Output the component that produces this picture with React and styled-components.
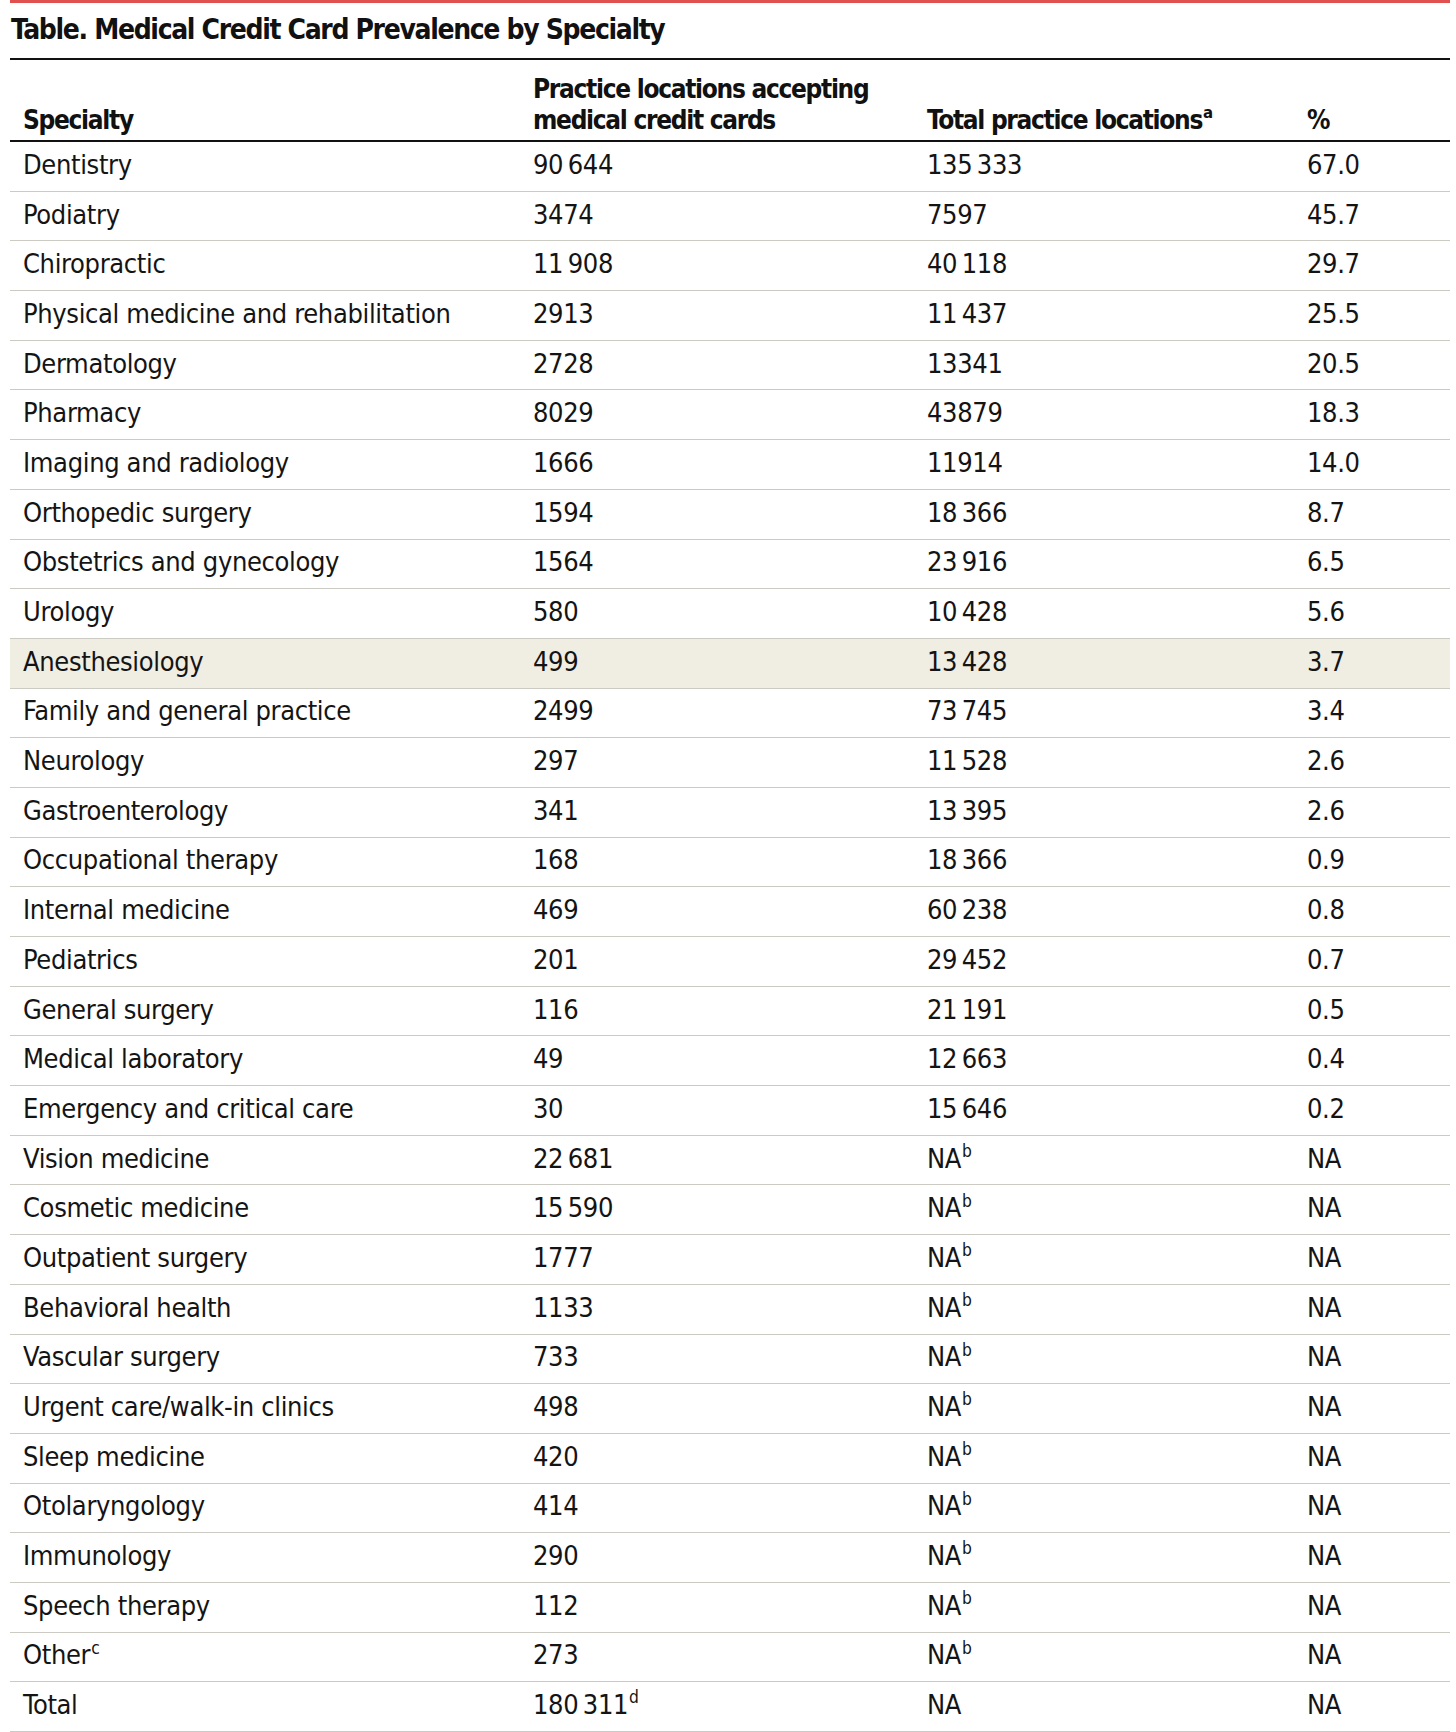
import React from 'react';
import styled, { createGlobalStyle } from 'styled-components';

const GlobalStyle = createGlobalStyle`
  html, body {
    margin: 0;
    padding: 0;
    background: #fff;
  }
  body {
    font-family: "DejaVu Sans Condensed", "Liberation Sans Narrow", "Liberation Sans", sans-serif;
    color: #141414;
  }
`;

// thin space between digit groups, as in the printed table
const n = s => s.replace(/ /g, '\u2009');

const rows = [
    ['Dentistry', '90 644', '135 333', '67.0'],
    ['Podiatry', '3474', '7597', '45.7'],
    ['Chiropractic', '11 908', '40 118', '29.7'],
    ['Physical medicine and rehabilitation', '2913', '11 437', '25.5'],
    ['Dermatology', '2728', '13341', '20.5'],
    ['Pharmacy', '8029', '43879', '18.3'],
    ['Imaging and radiology', '1666', '11914', '14.0'],
    ['Orthopedic surgery', '1594', '18 366', '8.7'],
    ['Obstetrics and gynecology', '1564', '23 916', '6.5'],
    ['Urology', '580', '10 428', '5.6'],
    ['Anesthesiology', '499', '13 428', '3.7', true],
    ['Family and general practice', '2499', '73 745', '3.4'],
    ['Neurology', '297', '11 528', '2.6'],
    ['Gastroenterology', '341', '13 395', '2.6'],
    ['Occupational therapy', '168', '18 366', '0.9'],
    ['Internal medicine', '469', '60 238', '0.8'],
    ['Pediatrics', '201', '29 452', '0.7'],
    ['General surgery', '116', '21 191', '0.5'],
    ['Medical laboratory', '49', '12 663', '0.4'],
    ['Emergency and critical care', '30', '15 646', '0.2'],
];

const naRows = [
    ['Vision medicine', '22 681'],
    ['Cosmetic medicine', '15 590'],
    ['Outpatient surgery', '1777'],
    ['Behavioral health', '1133'],
    ['Vascular surgery', '733'],
    ['Urgent care/walk-in clinics', '498'],
    ['Sleep medicine', '420'],
    ['Otolaryngology', '414'],
    ['Immunology', '290'],
    ['Speech therapy', '112'],
];

function App() {
    return (
        <Page>
            <GlobalStyle />
            <Title>Table. Medical Credit Card Prevalence by Specialty</Title>
            <HeadRow>
                <HeadCell>Specialty</HeadCell>
                <HeadCell>Practice locations accepting<br />medical credit cards</HeadCell>
                <HeadCell>Total practice locations<Sup>a</Sup></HeadCell>
                <HeadCell>%</HeadCell>
            </HeadRow>
            {rows.map(([name, accepting, total, pct, shaded]) => (
                <Row key={name} shaded={shaded ? 1 : 0}>
                    <Cell>{name}</Cell>
                    <Cell>{n(accepting)}</Cell>
                    <Cell>{n(total)}</Cell>
                    <Cell>{pct}</Cell>
                </Row>
            ))}
            {naRows.map(([name, accepting]) => (
                <Row key={name}>
                    <Cell>{name}</Cell>
                    <Cell>{n(accepting)}</Cell>
                    <Cell>NA<Sup>b</Sup></Cell>
                    <Cell>NA</Cell>
                </Row>
            ))}
            <Row>
                <Cell>Other<Sup>c</Sup></Cell>
                <Cell>273</Cell>
                <Cell>NA<Sup>b</Sup></Cell>
                <Cell>NA</Cell>
            </Row>
            <Row>
                <Cell>Total</Cell>
                <Cell>{n('180 311')}<Sup>d</Sup></Cell>
                <Cell>NA</Cell>
                <Cell>NA</Cell>
            </Row>
        </Page>
    );
}

export default App;

const Page = styled.div`
    width: 1440px;
    margin-left: 10px;
    border-top: 3px solid #e0504f;
`;

const Title = styled.h1`
    margin: 0;
    height: 55px;
    padding-left: 1px;
    font-size: 28px;
    font-weight: 700;
    line-height: 53px;
    letter-spacing: -1.35px;
    color: #111;
    border-bottom: 2px solid #111;
`;

const grid = `
    display: grid;
    grid-template-columns: 510px 394px 380px 1fr;
    padding-left: 13px;
`;

const HeadRow = styled.div`
    ${grid}
    align-items: end;
    padding-top: 14px;
    padding-bottom: 5px;
    border-bottom: 2px solid #111;
`;

const HeadCell = styled.div`
    font-size: 26px;
    font-weight: 700;
    line-height: 30.5px;
    letter-spacing: -1.3px;
    color: #111;
`;

const Row = styled.div`
    ${grid}
    align-items: center;
    height: 48.7px;
    border-bottom: 1px solid #cbcbc3;
    background: ${p => (p.shaded ? '#f0ede3' : 'transparent')};
`;

const Cell = styled.div`
    margin-top: -3px;
    font-size: 27px;
    line-height: 30px;
    letter-spacing: -0.35px;
    white-space: nowrap;
`;

const Sup = styled.sup`
    font-size: 0.64em;
    line-height: 0;
    vertical-align: 0.62em;
    margin-left: 1px;
    letter-spacing: 0;
`;
